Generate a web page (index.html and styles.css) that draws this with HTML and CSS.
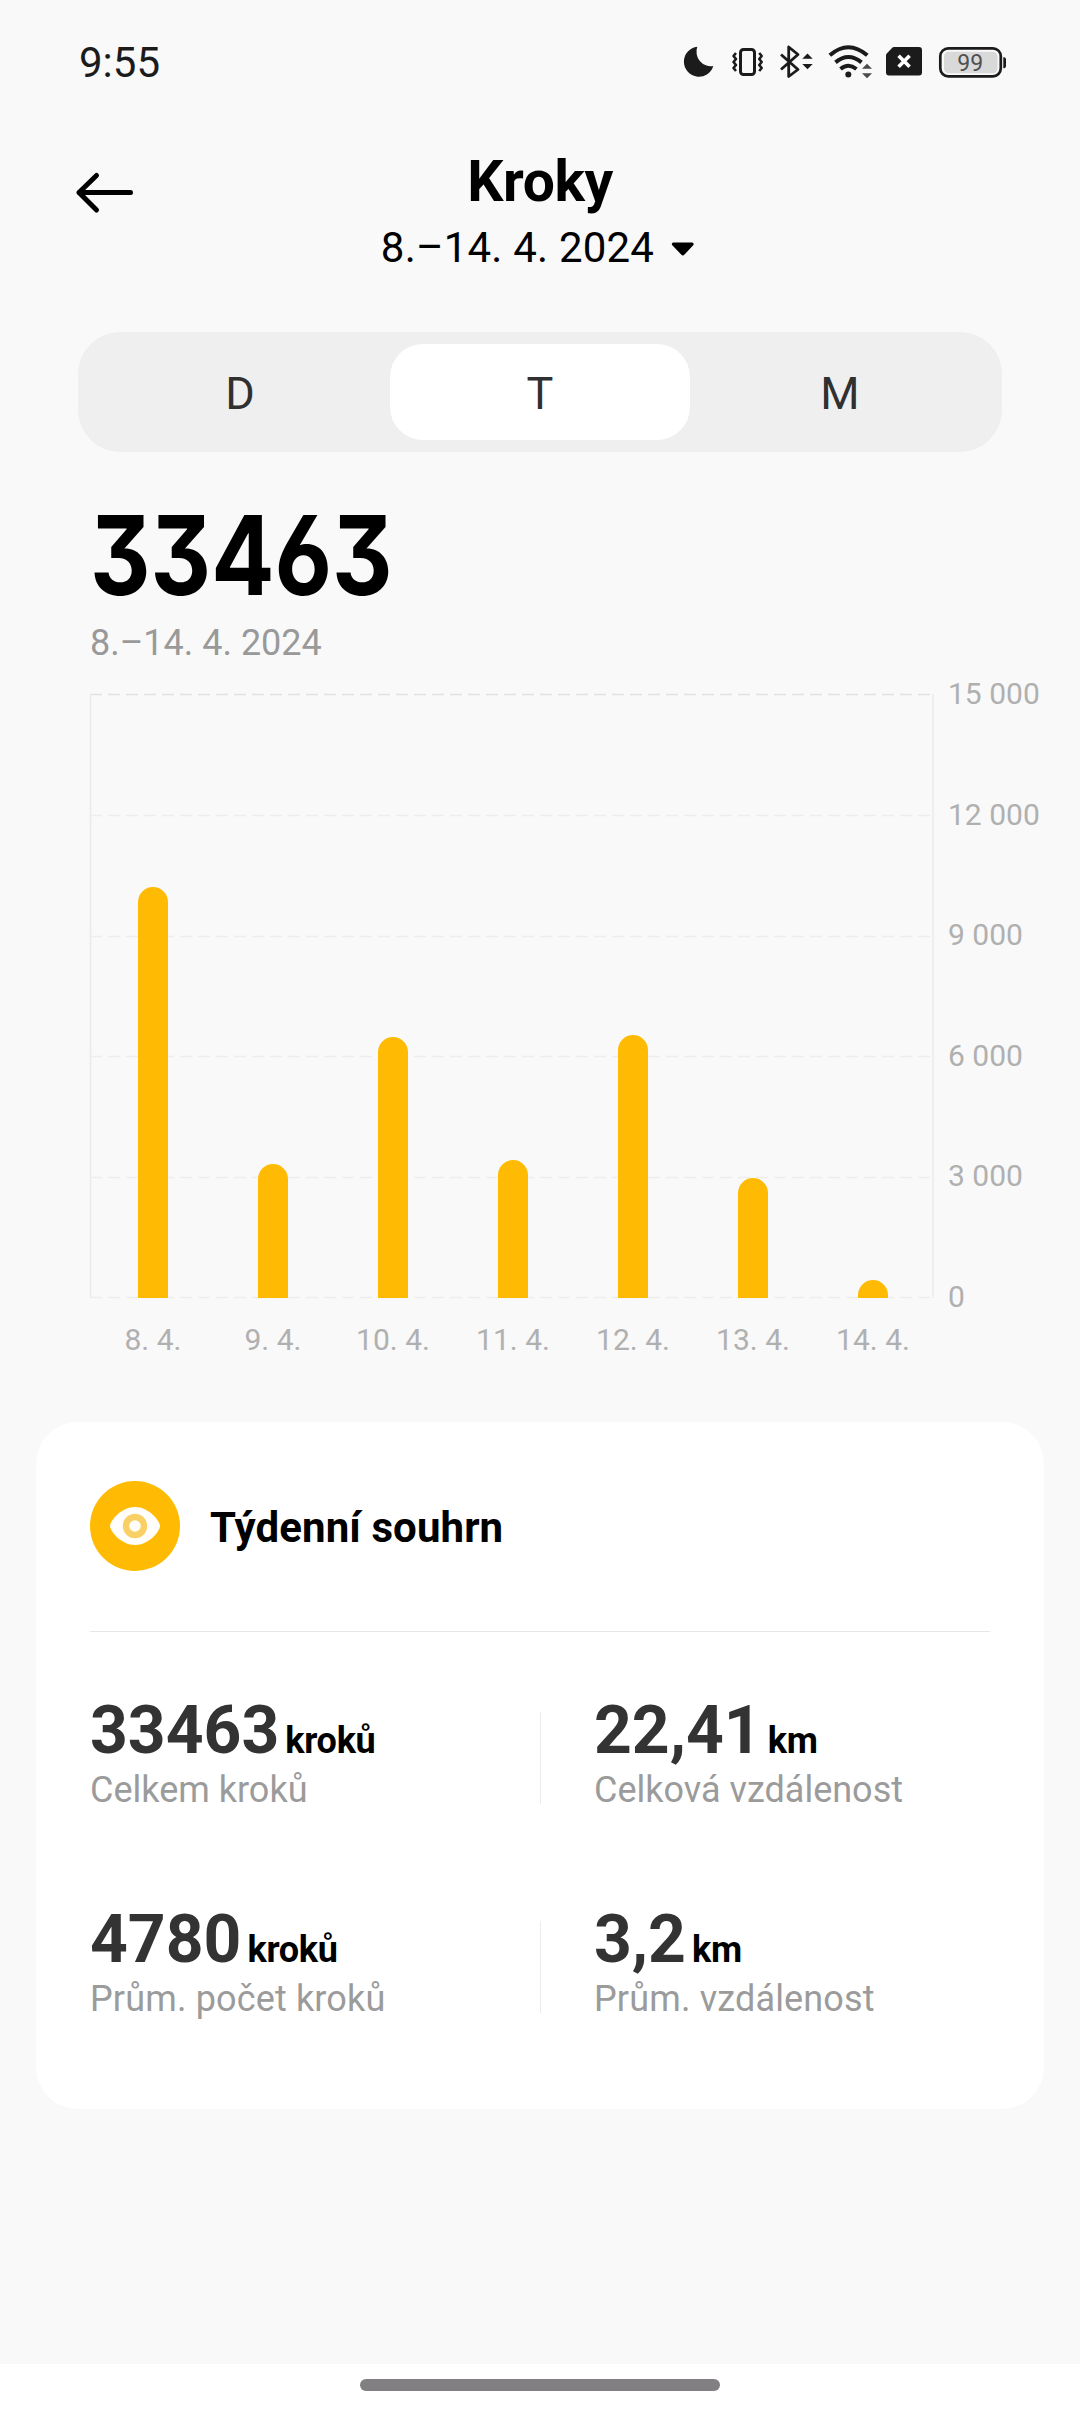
FILE: index.html
```html
<!DOCTYPE html>
<html lang="cs">
<head>
<meta charset="utf-8">
<title>Kroky</title>
<link rel="stylesheet" href="styles.css">
</head>
<body>
<header class="status-bar">
  <span class="clock">9:55</span>
  <div class="status-icons">
    <svg width="32" height="36" viewBox="0 0 32 36"><path fill="#1b1b1b" d="M13.3 2.8A15 15 0 1 0 29.3 22A14.5 14.5 0 0 1 13.3 2.8z"/></svg>
    <svg width="32" height="36" viewBox="0 0 32 36" fill="none" stroke="#1b1b1b" stroke-linejoin="round"><rect x="8.5" y="5.5" width="14" height="25" rx="3" stroke-width="3"/><path stroke-width="2.6" d="M4 9l-2.5 3 2.5 3-2.5 3 2.5 3-2.5 3 2.5 3M27.2 9l2.5 3-2.5 3 2.5 3-2.5 3 2.5 3-2.5 3"/></svg>
    <svg width="32" height="36" viewBox="0 0 32 36"><path fill="none" stroke="#1b1b1b" stroke-width="2.8" stroke-linejoin="round" d="M1 10.5L18 25.5L8.7 32.5V3L18 10.5L1 25.5"/><path fill="#1b1b1b" d="M22.3 14.7l5.2-5.2 5.2 5.2zM22.3 20l5.2 5.2 5.2-5.2z"/></svg>
    <svg width="42" height="36" viewBox="0 0 42 36"><g fill="none" stroke="#1b1b1b" stroke-width="4"><path d="M1.8 11.3Q20.3-4.8 39.3 11.3"/><path d="M7.5 18.4Q20.3 7.6 33.5 18.4"/><path d="M12.5 25Q20.3 18.6 28.5 25"/></g><circle cx="20.3" cy="30.5" r="3" fill="#1b1b1b"/><path fill="#4a4a4a" d="M34 24.7l5-5 5 5zM34 29.3l5 5 5-5z"/></svg>
    <svg width="37" height="36" viewBox="0 0 37 36"><path fill="#1b1b1b" d="M8 3H33a3 3 0 0 1 3 3V28.5a3 3 0 0 1-3 3H3a3 3 0 0 1-3-3V11.5a3 3 0 0 1 1-2.2L6 4a3 3 0 0 1 2-1z"/><path stroke="#fff" stroke-width="3.6" d="M12.6 11.8l11 11M23.6 11.8l-11 11"/></svg>
    <svg width="68" height="36" viewBox="0 0 68 36"><rect x="1.3" y="4.3" width="60.5" height="28" rx="8" fill="none" stroke="#1b1b1b" stroke-width="2.7"/><rect x="5" y="7.7" width="53.5" height="21.5" rx="4.5" fill="#d9d9d9"/><path fill="#1b1b1b" d="M64.3 13.3h1a2 2 0 0 1 1.7 2v7a2 2 0 0 1-1.7 2h-1z"/><text class="battery-level" x="31.3" y="26.6" text-anchor="middle">99</text></svg>
  </div>
</header>

<main class="screen">
  <div class="title-bar">
    <svg class="back" width="58" height="40" viewBox="0 0 58 40" fill="none" stroke="#000" stroke-width="5" stroke-linecap="round" stroke-linejoin="round"><path d="M54.5 19.5H3M20.5 2.5L3 19.5L20.5 37"/></svg>
    <div class="title-group">
      <h1 class="title">Kroky</h1>
      <div class="period"><span>8.–14. 4. 2024</span><svg width="30" height="20" viewBox="0 0 30 20"><path d="M4.5 4.5H23a1.6 1.6 0 0 1 1.2 2.7L15.5 16.5a2.2 2.2 0 0 1-3.3 0L3.3 7.2A1.6 1.6 0 0 1 4.5 4.5z"/></svg></div>
    </div>
  </div>

  <nav class="tabs">
    <span class="tab">D</span>
    <span class="tab tab-active">T</span>
    <span class="tab">M</span>
  </nav>

  <section class="total">
    <div class="total-value">33463</div>
    <div class="total-period">8.–14. 4. 2024</div>
  </section>

  <section class="chart">
    <div class="plot">
      <svg class="grid-lines" width="844" height="605" viewBox="0 0 844 605" fill="none">
        <path class="grid-dash grid-dash-top" d="M0 1.5H844"/>
        <path class="grid-dash" d="M0 122.5H844M0 243.5H844M0 363.5H844M0 484.5H844M0 604.5H844"/>
        <path class="grid-side" d="M.5 1V605M843 1V605"/>
      </svg>
      <div class="bars">
        <i class="bar" style="height:411px"></i>
        <i class="bar" style="height:134px"></i>
        <i class="bar" style="height:261px"></i>
        <i class="bar" style="height:138px"></i>
        <i class="bar" style="height:263px"></i>
        <i class="bar" style="height:120px"></i>
        <i class="bar" style="height:18px"></i>
      </div>
    </div>
    <div class="y-axis"><span>15 000</span><span>12 000</span><span>9 000</span><span>6 000</span><span>3 000</span><span>0</span></div>
    <div class="x-axis"><span>8. 4.</span><span>9. 4.</span><span>10. 4.</span><span>11. 4.</span><span>12. 4.</span><span>13. 4.</span><span>14. 4.</span></div>
  </section>

  <section class="card">
    <div class="card-head">
      <svg width="90" height="90" viewBox="0 0 90 90"><circle cx="45" cy="45" r="45" fill="#ffbb03"/><path fill="#fffefa" d="M20 45c0-5 11-19 25-19s25 14 25 19-11 19-25 19-25-14-25-19z"/><circle cx="45" cy="45" r="9" fill="none" stroke="#f8d066" stroke-width="6.4"/></svg>
      <h2 class="card-title">Týdenní souhrn</h2>
    </div>
    <div class="stats">
      <div class="stat"><div class="stat-value"><span>33463</span><span class="unit">kroků</span></div><div class="stat-label">Celkem kroků</div></div>
      <div class="stat stat-right"><div class="stat-value"><span>22,41</span><span class="unit">km</span></div><div class="stat-label">Celková vzdálenost</div></div>
      <div class="stat"><div class="stat-value"><span>4780</span><span class="unit">kroků</span></div><div class="stat-label stat-label-avg">Prům. počet kroků</div></div>
      <div class="stat stat-right"><div class="stat-value"><span>3,2</span><span class="unit">km</span></div><div class="stat-label stat-label-avg">Prům. vzdálenost</div></div>
    </div>
  </section>
</main>
<footer class="nav-bar"><div class="handle"></div></footer>
</body>
</html>
```
FILE: styles.css
```css
* { box-sizing: border-box; margin: 0; padding: 0; }

body {
  width: 1080px;
  height: 2412px;
  display: flex;
  flex-direction: column;
  background: #f9f9f9;
  color: #000;
  font-family: Roboto, "Liberation Sans", sans-serif;
  overflow: hidden;
}

svg { display: block; flex: none; overflow: visible; }

.status-bar {
  height: 124px;
  padding: 0 73px 0 79px;
  display: flex;
  align-items: center;
  justify-content: space-between;
}
.clock { font-size: 42px; line-height: 48px; color: #1b1b1b; padding-top: 1px; }
.status-icons { display: flex; gap: 16px; }
.battery-level { font-size: 23px; fill: #505050; }

.screen { flex: 1; display: flex; flex-direction: column; }

.title-bar {
  display: grid;
  grid-template-columns: 1fr auto 1fr;
  padding: 23px 76px 0;
}
.back { margin-top: 26px; }
.title-group { display: flex; flex-direction: column; align-items: center; gap: 8px; }
.title { font-size: 57px; line-height: 69px; font-weight: 700; letter-spacing: -.4px; }
.period {
  display: flex;
  align-items: center;
  gap: 15px;
  font-size: 42px;
  line-height: 48px;
  letter-spacing: .2px;
}

.tabs {
  margin: 60px 78px 0;
  padding: 12px;
  display: grid;
  grid-template-columns: repeat(3, 1fr);
  background: #efefef;
  border-radius: 42px;
}
.tab {
  height: 96px;
  padding-top: 3px;
  display: flex;
  align-items: center;
  justify-content: center;
  font-size: 45px;
  color: #303030;
  border-radius: 33px;
}
.tab-active { background: #fff; }

.total { margin: 48px 90px 0; }
.total-value {
  font-family: Inter, Roboto, sans-serif;
  font-size: 110.5px;
  line-height: 110px;
  font-weight: 700;
  font-feature-settings: "cv09", "cv03";
  transform: scaleX(.848);
  transform-origin: left;
}
.total-period { margin-top: 12px; font-size: 36px; line-height: 42px; color: #999; }

.chart {
  margin: 29px 0 0 90px;
  display: grid;
  grid-template-columns: 844px auto;
  column-gap: 14px;
  font-size: 30px;
  line-height: 36px;
  color: #b0b0b0;
}
.plot { display: grid; height: 605px; }
.grid-lines, .bars { grid-area: 1 / 1; }
.grid-dash { stroke: #ededed; stroke-width: 1.5; stroke-dasharray: 12 6; }
.grid-dash-top { stroke: #e2e2e2; }
.grid-side { stroke: #eaeaea; stroke-width: 1.5; }
.bars {
  display: grid;
  grid-template-columns: repeat(7, 120px);
  padding-left: 3px;
  align-items: end;
  justify-items: center;
}
.bar { width: 30px; background: #ffbb03; border-radius: 15px 15px 0 0; }
.y-axis {
  display: flex;
  flex-direction: column;
  justify-content: space-between;
  margin: -17px 0;
}
.x-axis {
  grid-column: 1;
  margin-top: 24px;
  padding-left: 3px;
  display: grid;
  grid-template-columns: repeat(7, 120px);
  text-align: center;
}

.card {
  margin: 64px 36px 0;
  padding: 59px 54px 89px;
  height: 687px;
  background: #fff;
  border-radius: 42px;
}
.card-head {
  display: flex;
  align-items: center;
  gap: 30px;
  padding-bottom: 60px;
  border-bottom: 1px solid #e6e6e6;
}
.card-title { font-size: 42px; line-height: 48px; font-weight: 700; padding-top: 3px; letter-spacing: .1px; }
.stats {
  margin-top: 60px;
  display: grid;
  grid-template-columns: 450px 450px;
  row-gap: 90px;
}
.stat-right {
  padding-left: 54px;
  background: linear-gradient(#ececec, #ececec) 0 20px / 1px 92px no-repeat;
}
.stat-value {
  display: flex;
  align-items: baseline;
  gap: 6px;
  height: 77px;
  font-size: 66px;
  line-height: 78px;
  font-weight: 700;
  color: #333;
}
.unit { font-size: 36px; color: #000; letter-spacing: -.3px; }
.stat-label { font-size: 36px; line-height: 42px; color: #9b9b9b; }
.stat-label-avg { letter-spacing: .15px; }

.nav-bar { height: 48px; padding-top: 15px; background: #fff; }
.handle { width: 360px; height: 12px; margin: 0 auto; border-radius: 6px; background: #827f82; }
```
